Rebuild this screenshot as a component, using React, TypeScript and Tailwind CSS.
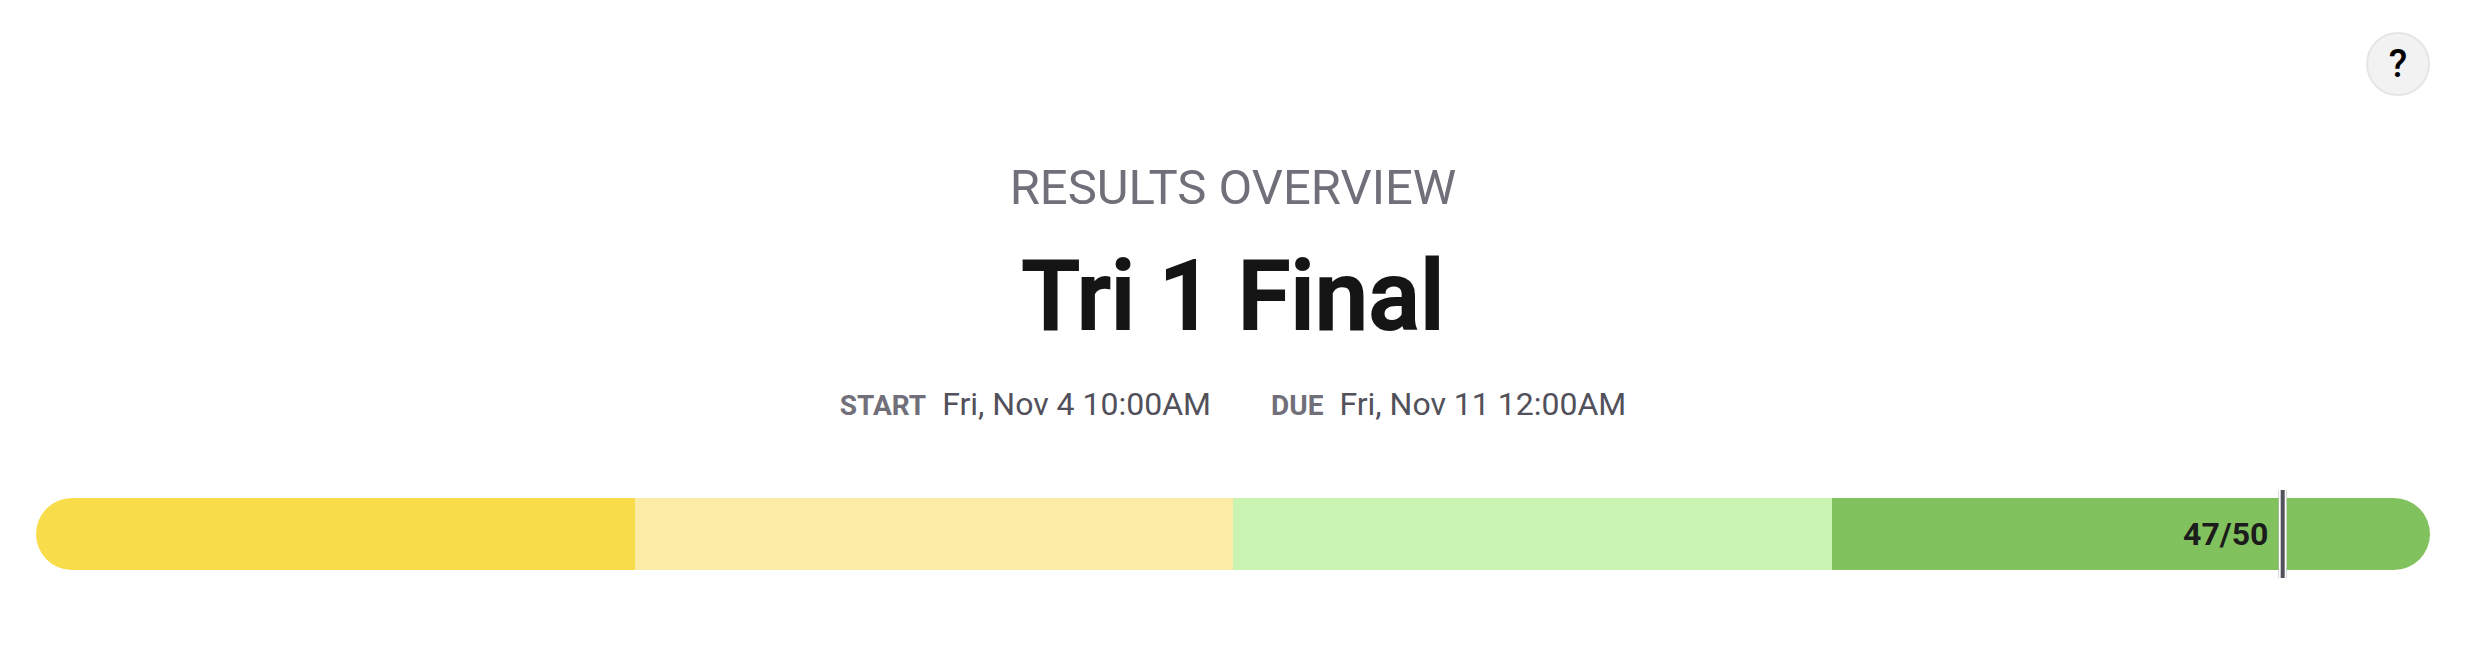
const segments = [
  { label: "Below basic", color: "bg-[#f8dc49]" },
  { label: "Basic", color: "bg-[#fceba5]" },
  { label: "Proficient", color: "bg-[#c9f4b1]" },
  { label: "Advanced", color: "bg-[#82c25e]" },
];

export default function App() {
  const score = 47;
  const total = 50;
  return (
    <main className="bg-white pt-8 pr-12 pb-24 pl-9 font-['Roboto',sans-serif]">
      <div className="flex justify-end">
        <button
          type="button"
          className="flex size-16 items-center justify-center rounded-full border-2 border-[#e6e6e6] bg-[#f2f2f2] text-[38px] font-medium text-black"
        >
          ?
        </button>
      </div>
      <header className="mt-16 flex flex-col items-center">
        <p className="text-[49px] leading-[56px] text-[#71707a]">RESULTS OVERVIEW</p>
        <h1 className="mt-6 text-[96px] leading-[112px] font-medium text-[#151515] [-webkit-text-stroke:2px_#151515]">
          Tri 1 Final
        </h1>
        <dl className="mt-8 flex gap-15 text-[32px] leading-[40px] text-[#52515b]">
          <div className="flex items-baseline gap-4">
            <dt className="text-[28px] font-bold text-[#71707a]">START</dt>
            <dd>Fri, Nov 4 10:00AM</dd>
          </div>
          <div className="flex items-baseline gap-4">
            <dt className="text-[28px] font-bold text-[#71707a]">DUE</dt>
            <dd>Fri, Nov 11 12:00AM</dd>
          </div>
        </dl>
      </header>
      <section className="relative mt-18">
        <div className="flex h-18 overflow-hidden rounded-full">
          {segments.map((s) => (
            <div key={s.label} className={`flex-1 ${s.color}`} />
          ))}
        </div>
        <div
          className="absolute -top-2 -bottom-2 flex -translate-x-full items-center gap-2.5"
          style={{ left: `${(score / total) * 100}%` }}
        >
          <span className="text-[32px] font-bold text-[#1c1c1c]">
            {score}/{total}
          </span>
          <span className="h-full w-2 border-x-2 border-white bg-[#52515b]" />
        </div>
      </section>
    </main>
  );
}
